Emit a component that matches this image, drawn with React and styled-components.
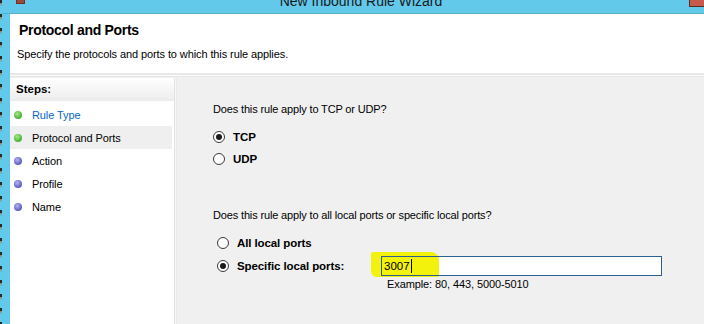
import React from 'react';
import styled, { createGlobalStyle } from 'styled-components';

const GlobalStyle = createGlobalStyle`
  html, body {
    margin: 0;
    padding: 0;
    background: #62c9eb;
  }
  body {
    font-family: 'Liberation Sans', Arial, sans-serif;
    color: #000;
  }
`;

const steps = [
  { label: 'Rule Type', done: true, link: true },
  { label: 'Protocol and Ports', done: true, current: true },
  { label: 'Action' },
  { label: 'Profile' },
  { label: 'Name' },
];

const App = () => {
  return (
    <>
      <GlobalStyle />
      <Window>
        <DesktopEdge />
        <Frame>
          <TitleBar>
            <TitleIcon />
            <TitleText>New Inbound Rule Wizard</TitleText>
            <CloseButton />
          </TitleBar>

          <Client>
            <Header>
              <HeaderTitle>Protocol and Ports</HeaderTitle>
              <HeaderSub>Specify the protocols and ports to which this rule applies.</HeaderSub>
            </Header>
            <Divider />

            <Body>
              <StepsPanel>
                <StepsHeader>Steps:</StepsHeader>
                {steps.map((s) => (
                  <StepRow key={s.label} $current={s.current}>
                    <Bullet $done={s.done} />
                    <StepLabel $link={s.link}>{s.label}</StepLabel>
                  </StepRow>
                ))}
              </StepsPanel>

              <Main>
                <Question>Does this rule apply to TCP or UDP?</Question>
                <RadioGroup>
                  <Option>
                    <Radio $checked />
                    <OptionLabel>TCP</OptionLabel>
                  </Option>
                  <Option>
                    <Radio />
                    <OptionLabel>UDP</OptionLabel>
                  </Option>
                </RadioGroup>

                <Question $second>
                  Does this rule apply to all local ports or specific local ports?
                </Question>
                <RadioGroup $indent>
                  <Option>
                    <Radio />
                    <OptionLabel>All local ports</OptionLabel>
                  </Option>
                  <PortRow>
                    <Option $fixed>
                      <Radio $checked />
                      <OptionLabel>Specific local ports:</OptionLabel>
                    </Option>
                    <PortField>
                      <Highlight />
                      <PortInput>
                        3007<Caret />
                      </PortInput>
                    </PortField>
                  </PortRow>
                  <Example>Example: 80, 443, 5000-5010</Example>
                </RadioGroup>
              </Main>
            </Body>
          </Client>
        </Frame>
      </Window>
    </>
  );
};

const Window = styled.div`
  width: 704px;
  height: 324px;
  display: flex;
  overflow: hidden;
`;

const DesktopEdge = styled.div`
  width: 2px;
  flex-shrink: 0;
  background: repeating-linear-gradient(
    to bottom,
    #2a2a2a 0,
    #2a2a2a 3px,
    #9a7a6a 3px,
    #62c9eb 6px,
    #62c9eb 14px
  );
`;

const Frame = styled.div`
  flex: 1;
  display: flex;
  flex-direction: column;
  background: #62c9eb;
  padding-left: 8px;
`;

const TitleBar = styled.div`
  height: 13px;
  flex-shrink: 0;
  display: flex;
  align-items: flex-end;
  overflow: hidden;
  margin-left: -8px;
  border-bottom: 1px solid #59aecb;
  position: relative;
`;

const TitleIcon = styled.div`
  position: absolute;
  left: 14px;
  top: -4px;
  width: 9px;
  height: 8px;
  background: #9b4a3a;
  border: 1px solid #6a2e22;
  box-sizing: border-box;
`;

const TitleText = styled.div`
  flex: 1;
  text-align: center;
  font-size: 14px;
  line-height: 14px;
  color: #1a1a1a;
  margin-bottom: 5px;
  padding-left: 16px;
`;

const CloseButton = styled.div`
  position: absolute;
  right: -4px;
  top: -6px;
  width: 17px;
  height: 11px;
  background: #c75a4c;
  border: 1px solid #5a2a24;
`;

const Client = styled.div`
  flex: 1;
  display: flex;
  flex-direction: column;
  background: #f0f0f0;
  min-height: 0;
`;

const Header = styled.div`
  background: #fff;
  height: 59px;
  padding-left: 7px;
  display: flex;
  flex-direction: column;
`;

const HeaderTitle = styled.div`
  font-weight: bold;
  font-size: 14px;
  line-height: 16px;
  margin-top: 8px;
  padding-left: 2px;
  letter-spacing: -0.3px;
`;

const HeaderSub = styled.div`
  font-size: 11px;
  line-height: 14px;
  margin-top: 9px;
  letter-spacing: -0.1px;
`;

const Divider = styled.div`
  height: 2px;
  background: #e8e8e8;
  border-bottom: 1px solid #fafafa;
`;

const Body = styled.div`
  flex: 1;
  display: flex;
  padding-top: 1px;
  border-top: 1px solid #e6e6e6;
`;

const StepsPanel = styled.div`
  width: 164px;
  background: #fff;
  border-right: 1px solid #e2e2e2;
  box-shadow: 1px 0 0 #f7f7f7, 2px 0 0 #e9e9e9;
  display: flex;
  flex-direction: column;
`;

const StepsHeader = styled.div`
  height: 23px;
  padding-left: 6px;
  font-weight: bold;
  font-size: 11.5px;
  line-height: 23px;
  background: linear-gradient(to bottom, #ffffff, #ececec);
  margin-bottom: 2px;
`;

const StepRow = styled.div`
  height: 23px;
  display: flex;
  align-items: center;
  padding-left: 4px;
  margin-right: 2px;
  background: ${(p) => (p.$current ? '#efefef' : 'transparent')};
`;

const Bullet = styled.span`
  width: 8px;
  height: 8px;
  border-radius: 50%;
  flex-shrink: 0;
  background: ${(p) =>
    p.$done
      ? 'radial-gradient(circle at 40% 35%, #a8e890, #46b22e 70%)'
      : 'radial-gradient(circle at 40% 35%, #b4b4ee, #5b5bc4 70%)'};
`;

const StepLabel = styled.span`
  margin-left: 10px;
  font-size: 11px;
  letter-spacing: -0.1px;
  color: ${(p) => (p.$link ? '#0a66cc' : '#000')};
`;

const Main = styled.div`
  flex: 1;
  padding: 24px 0 0 38px;
  display: flex;
  flex-direction: column;
`;

const Question = styled.div`
  font-size: 11px;
  line-height: 14px;
  letter-spacing: -0.15px;
  margin-top: ${(p) => (p.$second ? '38px' : '0')};
`;

const RadioGroup = styled.div`
  display: flex;
  flex-direction: column;
  padding-left: ${(p) => (p.$indent ? '4px' : '0')};
  margin-top: 10px;
`;

const Option = styled.div`
  display: flex;
  align-items: center;
  height: 22px;
  width: ${(p) => (p.$fixed ? '164px' : 'auto')};
  flex-shrink: 0;
`;

const Radio = styled.span`
  box-sizing: border-box;
  width: 12px;
  height: 12px;
  border-radius: 50%;
  border: 1px solid #3a3a3a;
  background: #fff;
  flex-shrink: 0;
  display: flex;
  align-items: center;
  justify-content: center;
  &::after {
    content: '';
    width: 6px;
    height: 6px;
    border-radius: 50%;
    background: ${(p) => (p.$checked ? '#1a1a1a' : 'transparent')};
  }
`;

const OptionLabel = styled.span`
  margin-left: 8px;
  font-weight: bold;
  font-size: 11.5px;
  letter-spacing: -0.1px;
`;

const PortRow = styled.div`
  display: flex;
  align-items: center;
  height: 24px;
`;

const PortField = styled.div`
  position: relative;
  width: 281px;
  height: 20px;
`;

const Highlight = styled.div`
  position: absolute;
  left: -10px;
  top: -4px;
  width: 68px;
  height: 25px;
  background: #f2f20c;
  border-radius: 2px 8px 2px 6px;
`;

const PortInput = styled.div`
  position: relative;
  box-sizing: border-box;
  height: 20px;
  border: 1px solid #2b5f91;
  background: linear-gradient(to right, transparent 57px, #fff 57px);
  font-size: 11.5px;
  padding-left: 2px;
  display: flex;
  align-items: center;
`;

const Caret = styled.span`
  display: inline-block;
  width: 1px;
  height: 14px;
  background: #000;
  margin-left: 1px;
`;

const Example = styled.div`
  font-size: 11px;
  line-height: 14px;
  letter-spacing: -0.1px;
  margin-left: 170px;
  margin-top: -1px;
`;

export default App;
